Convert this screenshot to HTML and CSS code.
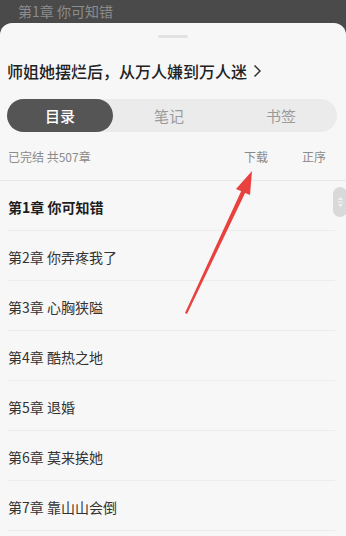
FILE: index.html
```html
<!DOCTYPE html>
<html lang="zh">
<head>
<meta charset="utf-8">
<link rel="stylesheet" href="styles.css">
</head>
<body>
<div class="page">
  <div class="topbar">第1章 你可知错</div>
  <div class="sheet">
    <div class="handle"></div>
    <div class="title">师姐她摆烂后，从万人嫌到万人迷<svg class="chev" width="9" height="14" viewBox="0 0 9 14"><path d="M1.5 1.5 L7 7 L1.5 12.5" fill="none" stroke="#333" stroke-width="1.5"/></svg></div>
    <div class="tabs">
      <div class="tab active">目录</div>
      <div class="tab">笔记</div>
      <div class="tab">书签</div>
    </div>
    <div class="info">
      <span class="status">已完结 共507章</span>
      <span class="actions"><span>下载</span><span>正序</span></span>
    </div>
    <ul class="list">
      <li class="chapter current">第1章 你可知错</li>
      <li class="chapter">第2章 你弄疼我了</li>
      <li class="chapter">第3章 心胸狭隘</li>
      <li class="chapter">第4章 酷热之地</li>
      <li class="chapter">第5章 退婚</li>
      <li class="chapter">第6章 莫来挨她</li>
      <li class="chapter">第7章 靠山山会倒</li>
    </ul>
    <div class="scroller"><svg width="7" height="14" viewBox="0 0 7 14"><path d="M3.5 2 L6 5 H1 Z M3.5 12 L6 9 H1 Z" fill="#f2f2f2"/><path d="M1 7 H6" stroke="#f2f2f2" stroke-width="1"/></svg></div>
  </div>
  <svg class="arrow" width="346" height="536" viewBox="0 0 346 536">
    <polygon points="185,314 187,315 248,188 244,186" fill="#e8413e"/>
    <polygon points="252,172 236,190 250,196" fill="#e8413e"/>
  </svg>
</div>
</body>
</html>
```
FILE: styles.css
```css
* { box-sizing: border-box; }
html, body { margin: 0; padding: 0; }
body {
  width: 346px;
  height: 536px;
  overflow: hidden;
  background: #4a4a4a;
  font-family: "Noto Sans CJK SC", "Noto Sans", sans-serif;
}
.page { position: relative; width: 346px; height: 536px; }
.topbar {
  height: 24px;
  padding-left: 18px;
  color: #8c8c8c;
  font-size: 14px;
  line-height: 24px;
  margin-top: -1px;
}
.sheet {
  position: relative;
  height: 513px;
  background: #f7f7f7;
  border-radius: 12px 12px 0 0;
  padding-top: 12px;
}
.handle {
  width: 30px;
  height: 3px;
  border-radius: 2px;
  background: #e2e2e2;
  margin: 0 auto;
}
.title {
  display: flex;
  align-items: center;
  gap: 6px;
  margin-top: 21px;
  padding-left: 7px;
  height: 24px;
  font-size: 16px;
  font-weight: 500;
  color: #222;
  line-height: 24px;
}
.chev { display: block; }
.tabs {
  display: grid;
  grid-template-columns: 106px 1fr 1fr;
  margin: 16px 9px 0 7px;
  height: 33px;
  border-radius: 17px;
  background: #ebebeb;
}
.tab {
  display: flex;
  align-items: center;
  justify-content: center;
  font-size: 15px;
  color: #9a9a9a;
}
.tab:nth-child(2) { padding-right: 0; }
.tab.active {
  background: #555;
  color: #fff;
  border-radius: 17px;
  font-weight: 500;
}
.info {
  display: flex;
  justify-content: space-between;
  align-items: center;
  height: 49px;
  padding: 0 20px 0 8px;
  font-size: 12px;
  color: #8a8a8a;
  border-bottom: 1px solid #e9e9e9;
}
.actions { display: flex; gap: 34px; }
.list {
  list-style: none;
  margin: 0;
  padding: 0 11px 0 8px;
}
.chapter {
  height: 50px;
  display: flex;
  align-items: center;
  padding-top: 2px;
  font-size: 14px;
  color: #333;
  border-bottom: 1px solid #ececec;
}
.chapter.current { font-weight: 700; color: #1e1e1e; }
.scroller {
  position: absolute;
  right: -1px;
  top: 164px;
  width: 14px;
  height: 30px;
  border-radius: 7px;
  background: #d9d9d9;
  display: flex;
  align-items: center;
  justify-content: center;
}
.scroller svg { display: block; }
.arrow { position: absolute; left: 0; top: 0; pointer-events: none; }
```
